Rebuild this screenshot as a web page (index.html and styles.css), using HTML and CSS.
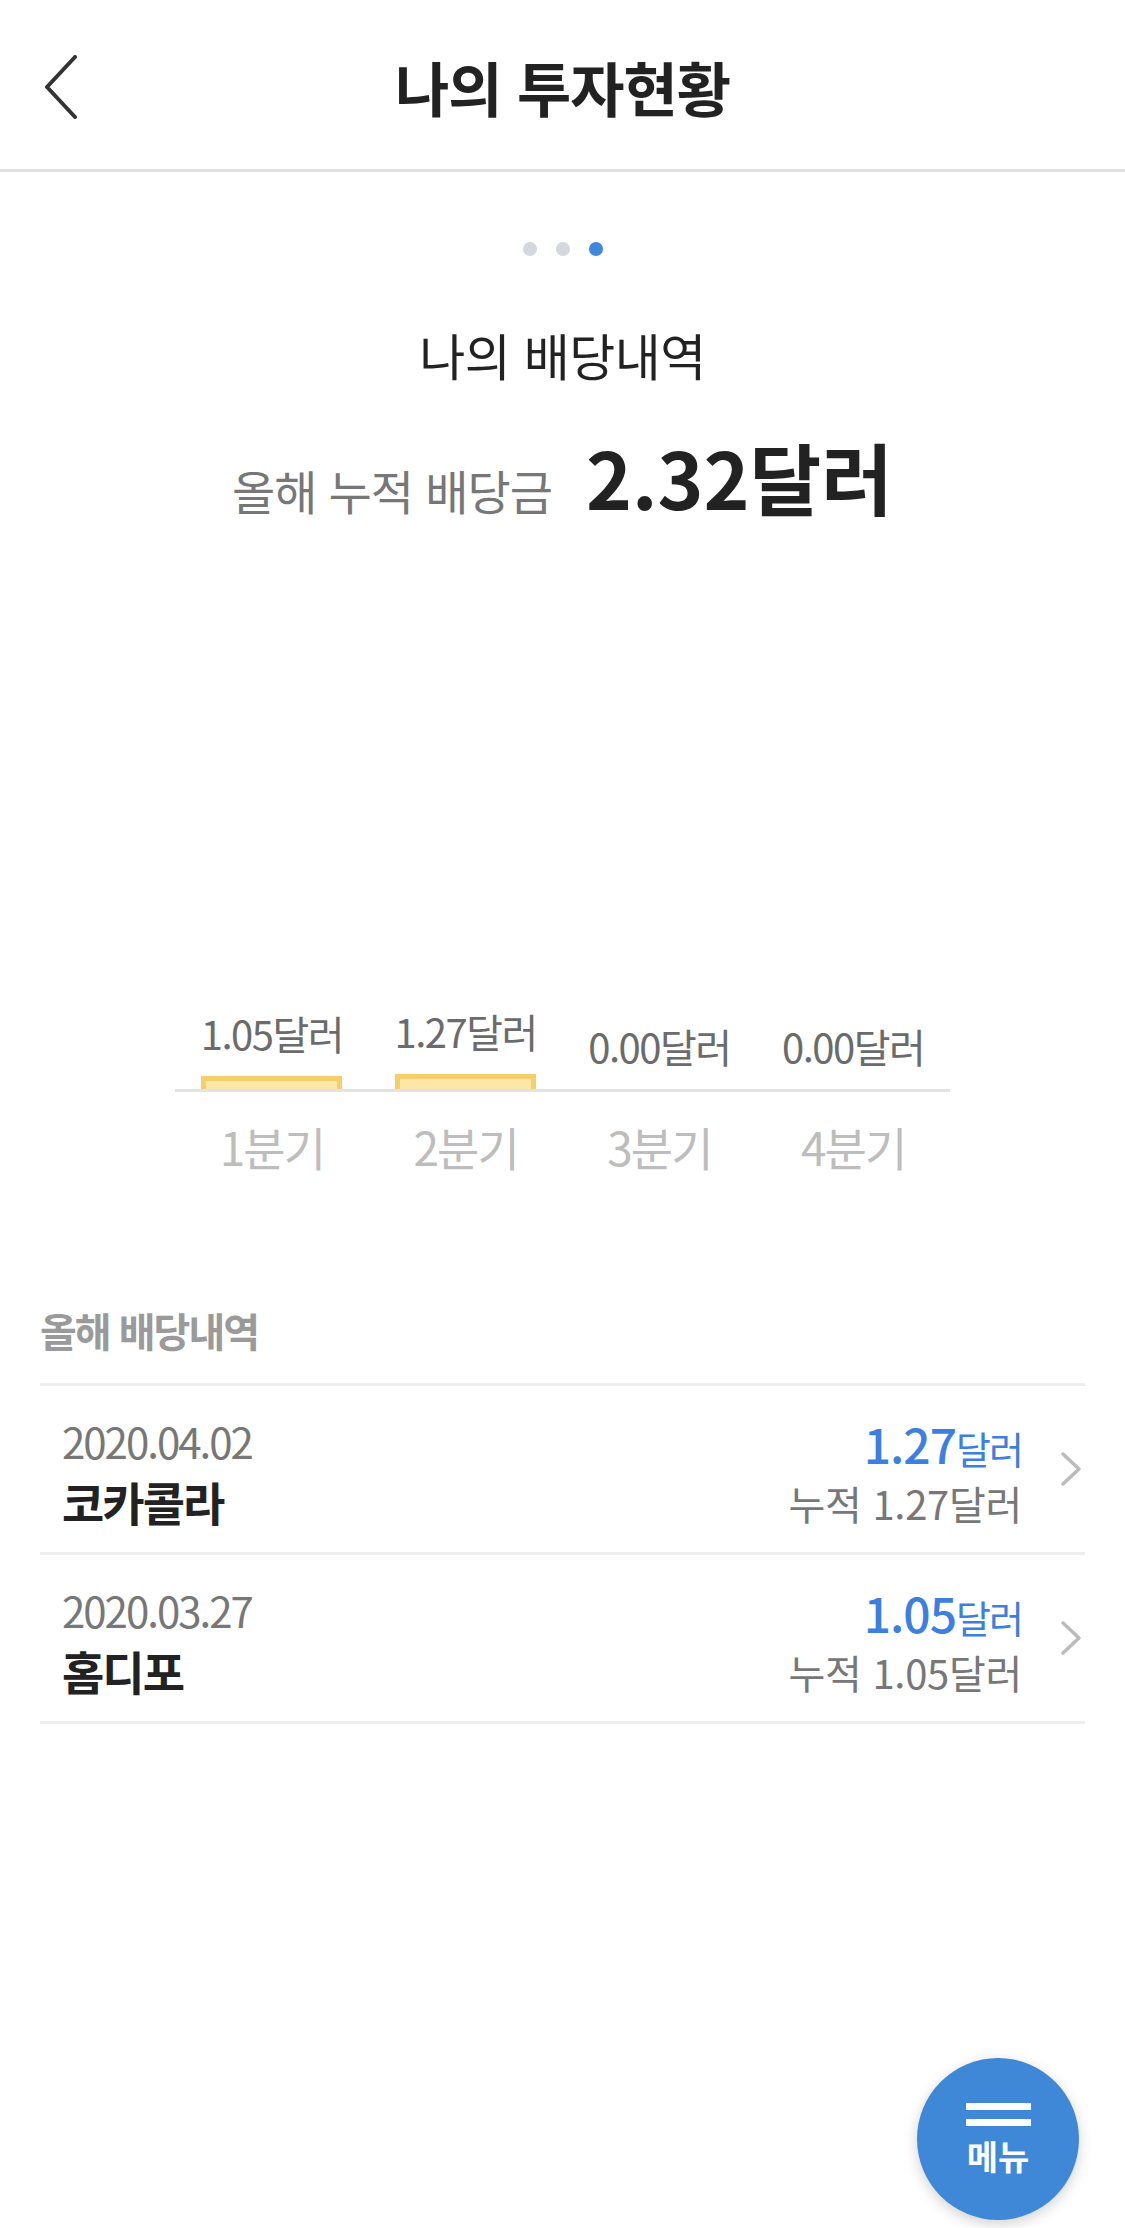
FILE: index.html
```html
<!DOCTYPE html>
<html lang="ko">
<head>
    <meta charset="UTF-8">
    <meta name="viewport" content="width=device-width, initial-scale=1.0">
    <title>나의 투자현황</title>
    <link rel="stylesheet" href="styles.css">
</head>
<body>

    <header class="topbar">
        <button class="back" aria-label="뒤로">
            <svg width="36" height="64" viewBox="0 0 36 64"><polyline points="32,2 4,32 32,62" /></svg>
        </button>
        <h1>나의 투자현황</h1>
        <span></span>
    </header>

    <main>
        <!-- Summary -->
        <section class="summary">
            <div class="dots"><span></span><span></span><span class="on"></span></div>
            <h2>나의 배당내역</h2>
            <div class="total">
                <span class="total-label">올해 누적 배당금</span>
                <strong>2.32달러</strong>
            </div>
        </section>

        <!-- Quarter chart -->
        <section class="chart">
            <div class="plot">
                <div class="col"><span class="val">1.05달러</span><div class="bar" style="height:13px"></div></div>
                <div class="col"><span class="val">1.27달러</span><div class="bar" style="height:15px"></div></div>
                <div class="col"><span class="val">0.00달러</span></div>
                <div class="col"><span class="val">0.00달러</span></div>
            </div>
            <div class="axis">
                <span>1분기</span>
                <span>2분기</span>
                <span>3분기</span>
                <span>4분기</span>
            </div>
        </section>

        <!-- History list -->
        <section class="history">
            <h3>올해 배당내역</h3>
            <ul>
                <li class="row">
                    <div class="info">
                        <span class="date">2020.04.02</span>
                        <span class="name">코카콜라</span>
                    </div>
                    <div class="amount">
                        <span class="paid"><b>1.27</b>달러</span>
                        <span class="acc">누적 1.27달러</span>
                    </div>
                    <svg class="arrow" width="22" height="36" viewBox="0 0 22 36"><polyline points="3,3 19,18 3,33" /></svg>
                </li>
                <li class="row">
                    <div class="info">
                        <span class="date">2020.03.27</span>
                        <span class="name">홈디포</span>
                    </div>
                    <div class="amount">
                        <span class="paid"><b>1.05</b>달러</span>
                        <span class="acc">누적 1.05달러</span>
                    </div>
                    <svg class="arrow" width="22" height="36" viewBox="0 0 22 36"><polyline points="3,3 19,18 3,33" /></svg>
                </li>
            </ul>
        </section>
    </main>

    <button class="fab">
        <span class="fab-line"></span>
        <span class="fab-line"></span>
        <span class="fab-text">메뉴</span>
    </button>

</body>
</html>
```

FILE: styles.css
```css
body {
    font-family: "Noto Sans CJK KR", "Noto Sans", sans-serif;
    margin: 0;
    padding: 0;
    background-color: #fff;
    color: #222;
    width: 1125px;
    height: 2228px;
    position: relative;
    overflow: hidden;
}

button {
    font-family: inherit;
    border: none;
    background: none;
    padding: 0;
    cursor: pointer;
}

/* Header */
.topbar {
    display: grid;
    grid-template-columns: 160px 1fr 160px;
    align-items: center;
    height: 164px;
    padding-top: 5px;
    border-bottom: 3px solid #e1e1e1;
}

.back {
    display: flex;
    padding-left: 43px;
}

.back polyline {
    fill: none;
    stroke: #333;
    stroke-width: 4;
    stroke-linecap: round;
    stroke-linejoin: round;
}

.topbar h1 {
    margin: 0;
    text-align: center;
    font-size: 59px;
    font-weight: 700;
    letter-spacing: -1px;
    line-height: 74px;
}

/* Summary */
.summary {
    display: flex;
    flex-direction: column;
    align-items: center;
}

.dots {
    display: flex;
    gap: 19px;
    margin-top: 70px;
}

.dots span {
    width: 14px;
    height: 14px;
    border-radius: 50%;
    background-color: #d3d7de;
}

.dots .on {
    background-color: #3f88dd;
}

.summary h2 {
    margin: 66px 0 0;
    font-size: 50px;
    font-weight: 400;
    line-height: 64px;
    letter-spacing: -0.5px;
}

.total {
    display: flex;
    align-items: baseline;
    gap: 34px;
    margin-top: 44px;
}

.total-label {
    font-size: 47px;
    color: #777;
    letter-spacing: -1px;
}

.total strong {
    font-size: 78px;
    font-weight: 700;
    line-height: 92px;
}

/* Chart */
.chart {
    margin: 0 175px;
}

.plot {
    display: grid;
    grid-template-columns: repeat(4, 1fr);
    align-items: end;
    height: 180px;
    margin-top: 385px;
    border-bottom: 3px solid #e3e3e3;
}

.col {
    display: flex;
    flex-direction: column;
    align-items: center;
}

.val {
    font-size: 40px;
    line-height: 48px;
    color: #6b6b6b;
    letter-spacing: -1.5px;
    margin-bottom: 19px;
}

.bar {
    box-sizing: border-box;
    width: 141px;
    background-color: #fce6a9;
    border: 5px solid #f6cf6a;
    border-bottom: none;
}

.axis {
    display: grid;
    grid-template-columns: repeat(4, 1fr);
    margin-top: 25px;
}

.axis span {
    text-align: center;
    font-size: 46px;
    line-height: 58px;
    color: #bdbdbd;
    letter-spacing: -2px;
}

/* History */
.history {
    margin: 129px 40px 0;
}

.history h3 {
    margin: 0 0 27px;
    font-size: 40px;
    font-weight: 700;
    line-height: 52px;
    color: #9a9a9a;
    letter-spacing: -2px;
}

.history ul {
    list-style: none;
    margin: 0;
    padding: 0;
    border-top: 3px solid #eee;
}

.row {
    display: flex;
    align-items: center;
    height: 166px;
    padding: 0 3px 0 22px;
    border-bottom: 3px solid #eee;
}

.info {
    display: flex;
    flex-direction: column;
    flex: 1;
    padding-top: 6px;
}

.date {
    font-size: 42px;
    line-height: 58px;
    color: #777;
    letter-spacing: -2px;
}

.name {
    font-size: 46px;
    font-weight: 700;
    line-height: 62px;
    letter-spacing: -2px;
}

.amount {
    display: flex;
    flex-direction: column;
    align-items: flex-end;
    margin-right: 38px;
    padding-top: 6px;
}

.paid {
    font-size: 38px;
    line-height: 56px;
    color: #3d7fdf;
    letter-spacing: -2px;
}

.paid b {
    font-size: 48px;
    font-weight: 500;
    letter-spacing: -1px;
}

.acc {
    font-size: 40px;
    line-height: 54px;
    color: #777;
    letter-spacing: -0.3px;
}

.arrow polyline {
    fill: none;
    stroke: #bbb;
    stroke-width: 3.5;
    stroke-linecap: round;
    stroke-linejoin: round;
}

/* Floating menu button */
.fab {
    position: absolute;
    right: 46px;
    bottom: 8px;
    width: 162px;
    height: 162px;
    border-radius: 50%;
    background-color: #3f88d8;
    box-shadow: 0 4px 14px rgba(0, 0, 0, 0.18);
    display: flex;
    flex-direction: column;
    align-items: center;
    justify-content: center;
    gap: 15px;
}

.fab-line {
    width: 65px;
    height: 7px;
    background-color: #fff;
}

.fab-line + .fab-line {
    margin-top: -6px;
}

.fab-text {
    color: #fff;
    font-size: 34px;
    font-weight: 700;
    line-height: 38px;
    margin-top: -4px;
}
```
